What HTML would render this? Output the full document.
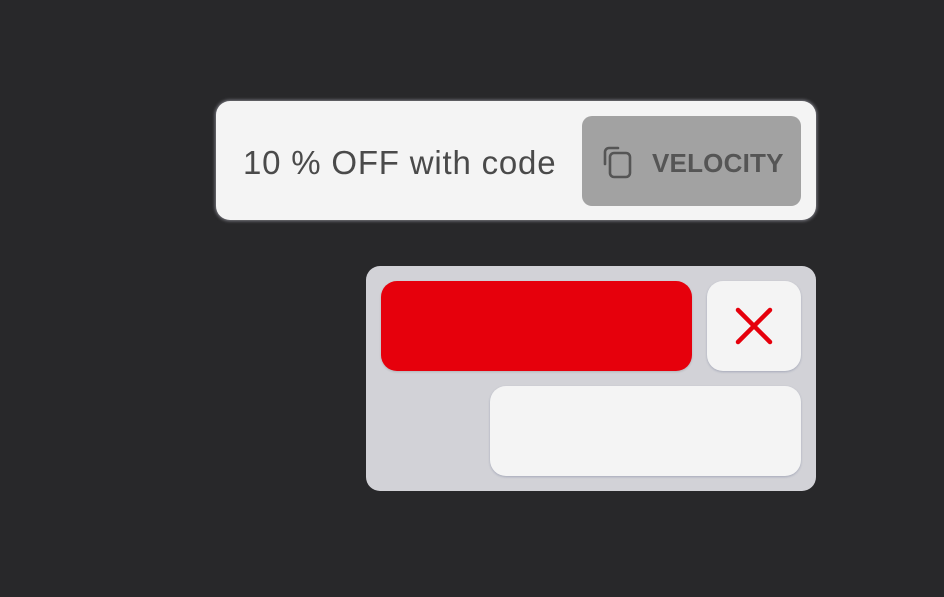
<!DOCTYPE html><html><head><style>
body{margin:0;width:944px;height:597px;background:#28282a;position:relative;overflow:hidden;font-family:"Liberation Sans",sans-serif}
.a{position:absolute;box-sizing:border-box}
</style></head><body>
<div class="a" style="left:216px;top:101px;width:600px;height:119px;background:#f4f4f4;border-radius:14px;box-shadow:0 0 3px 1px rgba(160,160,170,.7)"></div>
<div class="a" style="left:243px;top:141px;font-size:33px;letter-spacing:0.8px;color:#4a4a4a;white-space:nowrap;line-height:44px">10 % OFF with code</div>
<div class="a" style="left:582px;top:116px;width:219px;height:90px;background:#a2a2a2;border-radius:10px"></div>
<svg class="a" style="left:600px;top:144px" width="36" height="36" viewBox="0 0 36 36" fill="none" stroke="#555" stroke-width="2.6" stroke-linecap="round"><path d="M5 20V8a4 4 0 0 1 4-4h9"/><rect x="10" y="9" width="20" height="24" rx="4"/></svg>
<div class="a" style="left:652px;top:146px;font-size:26px;font-weight:bold;color:#555;line-height:34px;letter-spacing:0.2px">VELOCITY</div>
<div class="a" style="left:366px;top:266px;width:450px;height:225px;background:#d2d2d7;border-radius:14px"></div>
<div class="a" style="left:381px;top:281px;width:311px;height:90px;background:#e6000c;border-radius:16px;box-shadow:0 1px 2px rgba(0,0,0,.15)"></div>
<div class="a" style="left:707px;top:281px;width:94px;height:90px;background:#f4f4f4;border-radius:16px;box-shadow:0 1px 2px rgba(100,110,140,.4)"></div>
<svg class="a" style="left:707px;top:281px" width="94" height="90"><path d="M31 29L63 61M63 29L31 61" stroke="#e6000c" stroke-width="4.5" stroke-linecap="round"/></svg>
<div class="a" style="left:490px;top:386px;width:311px;height:90px;background:#f4f4f4;border-radius:16px;box-shadow:0 1px 2px rgba(100,110,140,.4)"></div>
</body></html>
